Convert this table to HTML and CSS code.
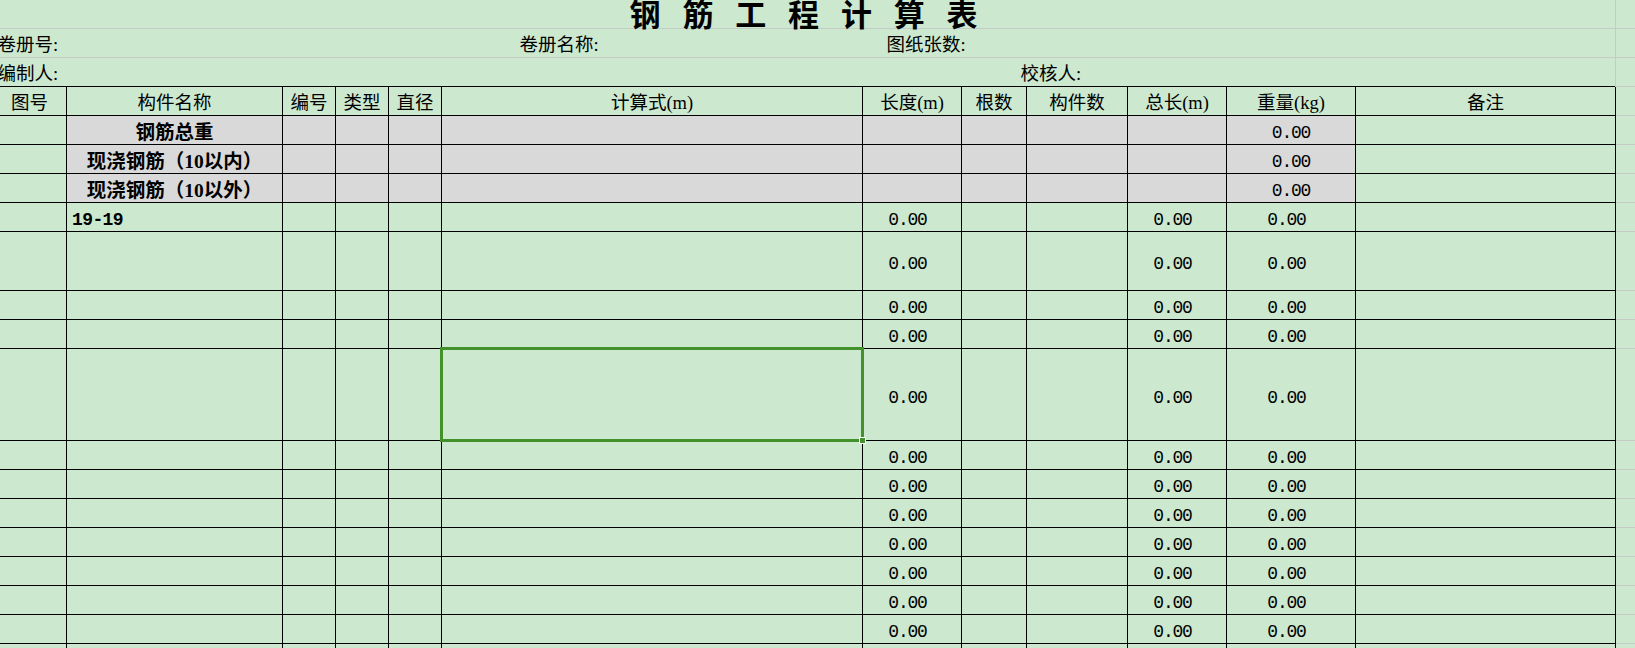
FILE: index.html
```html
<!DOCTYPE html>
<html lang="zh-CN">
<head>
<meta charset="utf-8">
<title>钢筋工程计算表</title>
<link rel="stylesheet" href="styles.css">
</head>
<body>
<div class="sheet">
<table class="grid">
<colgroup>
<col class="c-fig"><col class="c-name"><col class="c-no"><col class="c-type"><col class="c-dia"><col class="c-formula"><col class="c-len"><col class="c-cnt"><col class="c-parts"><col class="c-total"><col class="c-weight"><col class="c-note"><col class="c-extra">
</colgroup>
<tbody>
<tr class="r-title"><td colspan="12" class="top title">钢 筋 工 程 计 算 表</td><td class="extra"></td></tr>
<tr class="r"><td colspan="12" class="top info info-a"><div class="info-grid g1"><span>卷册号:</span><span>卷册名称:</span><span>图纸张数:</span></div></td><td class="extra"></td></tr>
<tr class="r"><td colspan="12" class="top info info-b"><div class="info-grid g2"><span>编制人:</span><span>校核人:</span></div></td><td class="extra"></td></tr>
<tr class="r head"><td>图号</td><td>构件名称</td><td>编号</td><td>类型</td><td>直径</td><td>计算式(m)</td><td>长度(m)</td><td>根数</td><td>构件数</td><td>总长(m)</td><td>重量(kg)</td><td>备注</td><td class="extra"></td></tr>
<tr class="r sum"><td></td><td class="g b">钢筋总重</td><td class="g"></td><td class="g"></td><td class="g"></td><td class="g"></td><td class="g"></td><td class="g"></td><td class="g"></td><td class="g"></td><td class="g num">0.00</td><td></td><td class="extra"></td></tr>
<tr class="r sum"><td></td><td class="g b">现浇钢筋（10以内）</td><td class="g"></td><td class="g"></td><td class="g"></td><td class="g"></td><td class="g"></td><td class="g"></td><td class="g"></td><td class="g"></td><td class="g num">0.00</td><td></td><td class="extra"></td></tr>
<tr class="r sum"><td></td><td class="g b">现浇钢筋（10以外）</td><td class="g"></td><td class="g"></td><td class="g"></td><td class="g"></td><td class="g"></td><td class="g"></td><td class="g"></td><td class="g"></td><td class="g num">0.00</td><td></td><td class="extra"></td></tr>
<tr class="r"><td></td><td class="code">19-19</td><td></td><td></td><td></td><td></td><td class="num v">0.00</td><td></td><td></td><td class="num v">0.00</td><td class="num v">0.00</td><td></td><td class="extra"></td></tr>
<tr class="r2"><td></td><td></td><td></td><td></td><td></td><td></td><td class="num v">0.00</td><td></td><td></td><td class="num v">0.00</td><td class="num v">0.00</td><td></td><td class="extra"></td></tr>
<tr class="r"><td></td><td></td><td></td><td></td><td></td><td></td><td class="num v">0.00</td><td></td><td></td><td class="num v">0.00</td><td class="num v">0.00</td><td></td><td class="extra"></td></tr>
<tr class="r"><td></td><td></td><td></td><td></td><td></td><td></td><td class="num v">0.00</td><td></td><td></td><td class="num v">0.00</td><td class="num v">0.00</td><td></td><td class="extra"></td></tr>
<tr class="r3"><td></td><td></td><td></td><td></td><td></td><td class="sel"><div class="sel-box"><span class="sel-handle"></span></div></td><td class="num v">0.00</td><td></td><td></td><td class="num v">0.00</td><td class="num v">0.00</td><td></td><td class="extra"></td></tr>
<tr class="r"><td></td><td></td><td></td><td></td><td></td><td></td><td class="num v">0.00</td><td></td><td></td><td class="num v">0.00</td><td class="num v">0.00</td><td></td><td class="extra"></td></tr>
<tr class="r"><td></td><td></td><td></td><td></td><td></td><td></td><td class="num v">0.00</td><td></td><td></td><td class="num v">0.00</td><td class="num v">0.00</td><td></td><td class="extra"></td></tr>
<tr class="r"><td></td><td></td><td></td><td></td><td></td><td></td><td class="num v">0.00</td><td></td><td></td><td class="num v">0.00</td><td class="num v">0.00</td><td></td><td class="extra"></td></tr>
<tr class="r"><td></td><td></td><td></td><td></td><td></td><td></td><td class="num v">0.00</td><td></td><td></td><td class="num v">0.00</td><td class="num v">0.00</td><td></td><td class="extra"></td></tr>
<tr class="r"><td></td><td></td><td></td><td></td><td></td><td></td><td class="num v">0.00</td><td></td><td></td><td class="num v">0.00</td><td class="num v">0.00</td><td></td><td class="extra"></td></tr>
<tr class="r"><td></td><td></td><td></td><td></td><td></td><td></td><td class="num v">0.00</td><td></td><td></td><td class="num v">0.00</td><td class="num v">0.00</td><td></td><td class="extra"></td></tr>
<tr class="r"><td></td><td></td><td></td><td></td><td></td><td></td><td class="num v">0.00</td><td></td><td></td><td class="num v">0.00</td><td class="num v">0.00</td><td></td><td class="extra"></td></tr>
<tr class="r"><td></td><td></td><td></td><td></td><td></td><td></td><td class="num v">0.00</td><td></td><td></td><td class="num v">0.00</td><td class="num v">0.00</td><td></td><td class="extra"></td></tr>
</tbody>
</table>
</div>
</body>
</html>
```

FILE: styles.css
```css
html, body {
  margin: 0;
  padding: 0;
  width: 1635px;
  height: 648px;
  overflow: hidden;
  background: #cce8cf;
}

.sheet {
  margin-left: -8px;
  margin-top: -12px;
}

.grid {
  border-collapse: collapse;
  table-layout: fixed;
  width: 1703px;
  font-family: "Liberation Serif", "Noto Sans CJK SC", serif;
  font-size: 18.5px;
  line-height: 20px;
  color: #000;
  text-spacing-trim: space-all;
}

.c-fig { width: 74px; }
.c-name { width: 216px; }
.c-no { width: 53px; }
.c-type { width: 53px; }
.c-dia { width: 53px; }
.c-formula { width: 421px; }
.c-len { width: 99px; }
.c-cnt { width: 65px; }
.c-parts { width: 101px; }
.c-total { width: 99px; }
.c-weight { width: 129px; }
.c-note { width: 260px; }
.c-extra { width: 80px; }

.grid td {
  border: 1px solid #000;
  padding: 7px 0 0 0;
  text-align: center;
  vertical-align: middle;
  white-space: nowrap;
  overflow: visible;
}

.r-title { height: 40px; }
.r { height: 29px; }
.r2 { height: 59px; }
.r3 { height: 92px; }

.grid td.top {
  border-top: none;
  border-left: none;
  border-right: 1px solid #c5ccc6;
  border-bottom: 1px solid #c5ccc6;
}

.grid td.info-b {
  border-bottom: none;
}

.grid td.extra {
  border-top: none;
  border-left: none;
  border-right: none;
  border-bottom: 1px solid #c5ccc6;
}

.grid td.title {
  font-family: "Noto Sans CJK SC", sans-serif;
  font-weight: 700;
  font-size: 31px;
  line-height: 31px;
  letter-spacing: 7.4px;
  padding: 0 0 0 7px;
  vertical-align: bottom;
}

.grid td.info {
  text-align: left;
  padding-top: 0;
}

.info-grid {
  display: grid;
  padding-left: 5px;
  padding-top: 5px;
}

.g1 { grid-template-columns: 522px 367px auto; }
.g2 { grid-template-columns: 1023px auto; }

.head td:not(.extra) {
  padding-top: 5px;
}

.g { background: #d9d9d9; }

.grid td.b {
  font-weight: 700;
  font-size: 19.5px;
}

.num {
  font-family: "Liberation Mono", monospace;
  font-size: 18px;
  letter-spacing: -1.2px;
}

.grid td.num.v {
  padding-right: 9px;
}

.grid td.code {
  text-align: left;
  padding-left: 5px;
  font-family: "Liberation Mono", monospace;
  font-weight: 700;
  font-size: 18px;
  letter-spacing: -0.6px;
}

.sel {
  position: relative;
}

.sel-box {
  position: absolute;
  top: -2px;
  left: -2px;
  right: -2px;
  bottom: -2px;
  border: 3px solid #43912a;
}

.sel-handle {
  position: absolute;
  right: -5px;
  bottom: -5px;
  width: 5px;
  height: 5px;
  background: #43912a;
  border: 1px solid #fff;
}
```
